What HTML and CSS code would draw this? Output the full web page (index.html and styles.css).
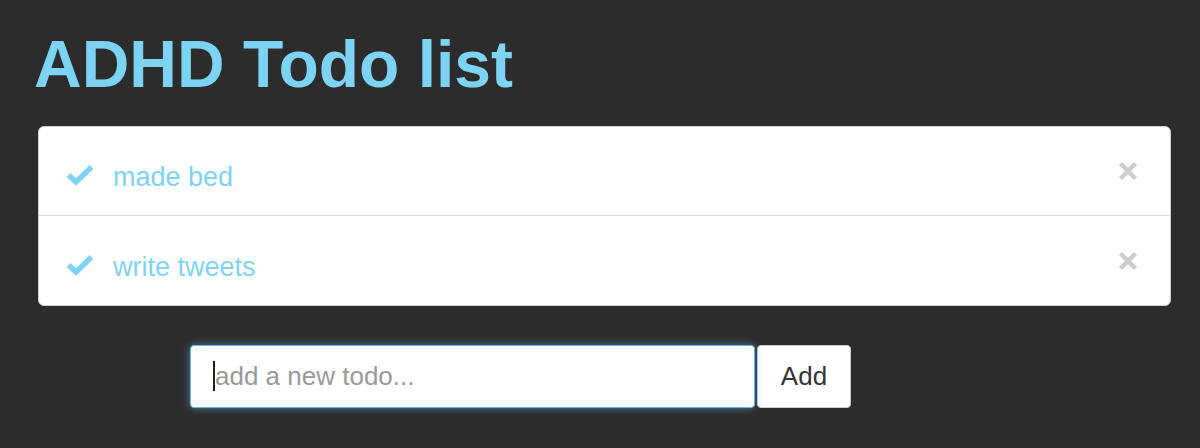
FILE: index.html
```html
<!DOCTYPE html>
<html>
<head>
<meta charset="utf-8">
<title>ADHD Todo list</title>
<link rel="stylesheet" href="styles.css">
</head>
<body>
<div class="page">
  <h1 class="title">ADHD Todo list</h1>
  <ul class="todos">
    <li class="todo">
      <svg class="check" width="28" height="22" viewBox="0 0 28 22"><path d="M2.5 11 L10 18 L25.5 3" fill="none" stroke="#7dd3f4" stroke-width="5.5"/></svg>
      <span class="label">made bed</span>
      <svg class="remove" width="20" height="20" viewBox="0 0 20 20"><path d="M2.5 2.5 L17.5 17.5 M17.5 2.5 L2.5 17.5" fill="none" stroke="#cccccc" stroke-width="4.5"/></svg>
    </li>
    <li class="todo">
      <svg class="check" width="28" height="22" viewBox="0 0 28 22"><path d="M2.5 11 L10 18 L25.5 3" fill="none" stroke="#7dd3f4" stroke-width="5.5"/></svg>
      <span class="label">write tweets</span>
      <svg class="remove" width="20" height="20" viewBox="0 0 20 20"><path d="M2.5 2.5 L17.5 17.5 M17.5 2.5 L2.5 17.5" fill="none" stroke="#cccccc" stroke-width="4.5"/></svg>
    </li>
  </ul>
  <form class="add-form">
    <span class="field">
      <input class="new-todo" type="text" placeholder="add a new todo...">
      <span class="caret"></span>
    </span>
    <button class="add-btn" type="button">Add</button>
  </form>
</div>
</body>
</html>
```
FILE: styles.css
```css
html, body {
  margin: 0;
  padding: 0;
  background: #2c2c2c;
  height: 100%;
}
body {
  font-family: "Liberation Sans", Arial, sans-serif;
}
.page {
  padding: 24px 29px 0 38px;
}
.title {
  margin: 0 0 22px -4px;
  font-size: 66px;
  line-height: 80px;
  font-weight: bold;
  color: #7dd3f4;
}
.todos {
  list-style: none;
  margin: 0;
  padding: 0;
  background: #fff;
  border: 1px solid #cfcfcf;
  border-radius: 6px;
}
.todo {
  display: flex;
  align-items: center;
  height: 88px;
  padding: 0 32px 0 27px;
}
.todo + .todo {
  height: 89px;
  border-top: 1px solid #dddddd;
}
.check {
  flex: none;
  margin-top: 8px;
}
.label {
  margin: 12px 0 0 19px;
  font-size: 27px;
  line-height: 32px;
  color: #7dd3f4;
}
.remove {
  flex: none;
  margin-left: auto;
}
.add-form {
  display: flex;
  margin: 39px 0 0 152px;
}
.field {
  position: relative;
  display: block;
}
.new-todo {
  display: block;
  box-sizing: border-box;
  width: 565px;
  height: 63px;
  margin: 0;
  padding: 0 0 0 24px;
  border: 1px solid #66afe9;
  border-radius: 4px;
  box-shadow: 0 0 8px rgba(102, 175, 233, 0.6);
  outline: none;
  background: #fff;
  font-family: "Liberation Sans", Arial, sans-serif;
  font-size: 26px;
  color: #333;
}
.new-todo::placeholder {
  color: #999;
}
.caret {
  position: absolute;
  left: 23px;
  top: 16px;
  width: 2px;
  height: 30px;
  background: #222;
}
.add-btn {
  box-sizing: border-box;
  width: 94px;
  height: 63px;
  margin: 0 0 0 2px;
  padding: 0;
  border: 1px solid #cccccc;
  border-radius: 4px;
  background: #fff;
  font-family: "Liberation Sans", Arial, sans-serif;
  font-size: 26px;
  color: #333;
}
```
